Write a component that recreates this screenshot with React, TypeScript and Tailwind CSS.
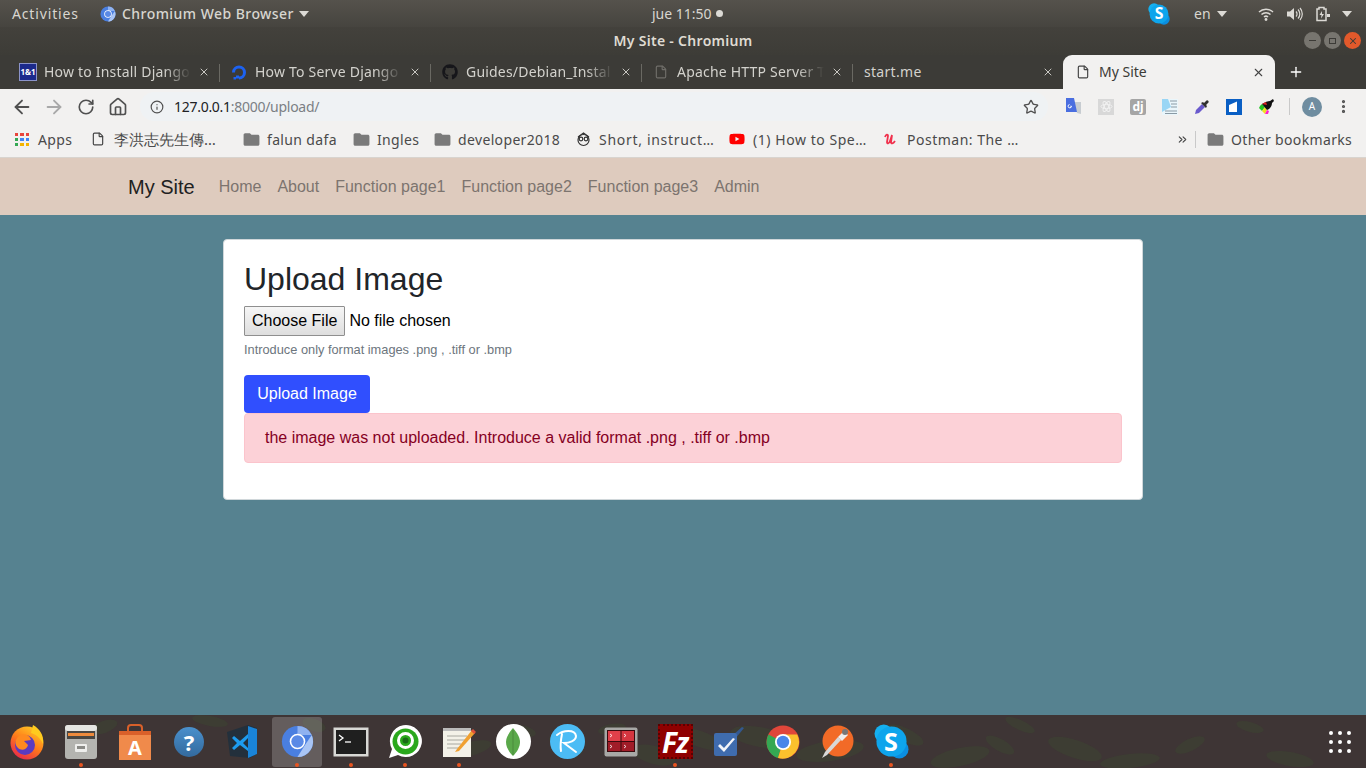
import React from 'react'
import { ArrowLeft, ArrowRight, RotateCw, House, Info, Star, X, Plus, File, EllipsisVertical, ChevronsRight } from 'lucide-react'
import { FaGithub, FaYoutube } from 'react-icons/fa'
import { MdFolder } from 'react-icons/md'

const Caret = ({ className = '' }: { className?: string }) => (
  <svg width="10" height="6" viewBox="0 0 10 6" className={className}>
    <path d="M0 0h10L5 6z" fill="#dcdad5" />
  </svg>
)

const ChromiumIcon = ({ size = 16 }: { size?: number }) => (
  <svg width={size} height={size} viewBox="0 0 36 36">
    <circle cx="18" cy="18" r="17" fill="#4a7fe0" />
    <path d="M18 1a17 17 0 0 1 15.5 10H18z" fill="#8fb2f0" />
    <path d="M33.5 11A17 17 0 0 1 18 35l8-13z" fill="#a9c5f5" />
    <circle cx="18" cy="18" r="8.5" fill="#fff" />
    <circle cx="18" cy="18" r="6.8" fill="#5a8ae6" />
  </svg>
)

const SkypeIcon = ({ size = 22 }: { size?: number }) => (
  <span className="relative flex items-center justify-center" style={{ width: size, height: size }}>
    <svg width={size} height={size} viewBox="0 0 36 36" className="absolute inset-0">
      <circle cx="10" cy="10" r="9.5" fill="#15b0f0" />
      <circle cx="26" cy="26" r="9.5" fill="#0b8ee0" />
      <circle cx="18" cy="18" r="15.5" fill="#0ea5ec" />
    </svg>
    <span className="relative font-bold text-white leading-none font-['Open_Sans',sans-serif]" style={{ fontSize: size * 0.72 }}>S</span>
  </span>
)

const Tab = ({ icon, title }: { icon: React.ReactNode; title: string }) => (
  <div className="relative flex h-full w-[211px] shrink-0 items-center pl-3">
    <span className="flex w-4 shrink-0 justify-center">{icon}</span>
    <span className="ml-2 w-[147px] overflow-hidden whitespace-nowrap pb-[2px] tracking-[0.2px] [mask-image:linear-gradient(to_right,black_82%,transparent)]">{title}</span>
    <X size={12} strokeWidth={2} className="absolute left-[190px] text-[#c9c8c3]" />
    <span className="absolute right-[-1px] top-[9px] h-[18px] w-px bg-[#6a6963]" />
  </div>
)

const Folder = () => <MdFolder size={19} className="shrink-0 text-[#7a7a7a]" />

const Bookmark = ({ icon, label, width, labelClass = 'tracking-[0.35px]' }: { icon: React.ReactNode; label: string; width: number; labelClass?: string }) => (
  <div className="flex shrink-0 items-center" style={{ width }}>
    <span className="flex w-4 shrink-0 justify-center">{icon}</span>
    <span className={`ml-2 whitespace-nowrap ${labelClass}`}>{label}</span>
  </div>
)

const ExtSlot = ({ children }: { children: React.ReactNode }) => (
  <span className="flex h-4 w-8 shrink-0 items-center justify-center">{children}</span>
)

const Dock = ({ children, active, dot }: { children: React.ReactNode; active?: boolean; dot?: boolean }) => (
  <div className="relative flex h-full w-[54px] shrink-0 items-center justify-center">
    {active && <span className="absolute left-[2px] top-[2px] h-[50px] w-[50px] rounded-[3px] bg-white/20" />}
    <span className="relative flex h-[38px] w-[38px] items-center justify-center">{children}</span>
    {dot && <span className="absolute bottom-[1px] left-[25px] h-1 w-1 rounded-full bg-[#e95420]" />}
  </div>
)

// foliage in the wallpaper: cx, cy, rx, ry, rotation
const leaves = [
  [104, 12, 14, 6, -20], [210, 6, 18, 5, 10], [314, 10, 12, 6, 20], [470, 34, 22, 7, -15], [520, 16, 16, 6, 10],
  [566, 30, 18, 8, 25], [612, 14, 14, 5, -10], [654, 40, 22, 9, 15], [700, 24, 26, 8, 20], [760, 22, 30, 10, 10],
  [830, 36, 34, 10, -8], [905, 20, 20, 7, 25], [960, 42, 30, 9, -12], [1020, 10, 16, 5, 25], [1075, 34, 28, 9, 18],
  [1130, 46, 30, 7, -6], [1190, 30, 16, 6, -25], [1250, 12, 14, 5, 15], [1290, 44, 24, 7, 10], [1000, 30, 16, 6, 30],
]

export default function App() {
  return (
    <div className="flex h-screen w-full flex-col overflow-hidden bg-[#568290] font-['Noto_Sans',sans-serif]">
      {/* Ubuntu top bar */}
      <div className="relative flex h-[27px] shrink-0 items-center bg-gradient-to-b from-[#55524c] to-[#46443f] text-[14px] text-[#d8d6d0]">
        <span className="ml-3 w-[68px] whitespace-nowrap tracking-[0.85px]">Activities</span>
        <span className="ml-5"><ChromiumIcon /></span>
        <span className="ml-1.5 w-[172px] whitespace-nowrap font-medium tracking-[0.45px]">Chromium Web Browser</span>
        <Caret className="ml-[5px]" />
        <div className="absolute left-[652px] top-0 flex h-full items-center">
          <span className="whitespace-nowrap">jue 11:50</span>
          <span className="ml-1 h-[7px] w-[7px] rounded-full bg-[#dcdad5]" />
        </div>
        <div className="ml-auto flex items-center">
          <SkypeIcon />
          <span className="ml-6 w-[20px]">en</span>
          <Caret className="ml-[3px]" />
          <svg width="16" height="14" viewBox="0 0 16 14" className="ml-[31px]">
            <path d="M1 5a10 10 0 0 1 14 0M3.5 7.5a6.5 6.5 0 0 1 9 0M6 10a3 3 0 0 1 4 0" fill="none" stroke="#dcdad5" strokeWidth="1.5" />
            <circle cx="8" cy="12.5" r="1.4" fill="#dcdad5" />
          </svg>
          <svg width="16" height="14" viewBox="0 0 16 14" className="ml-[13px]">
            <path d="M0 4.5h3L7 1v12L3 9.500H0z" fill="#dcdad5" />
            <path d="M9 4.500a3.500 3.500 0 0 1 0 5M11 2.500a6.500 6.500 0 0 1 0 9M13 1a9 9 0 0 1 0 12" fill="none" stroke="#dcdad5" strokeWidth="1.2" />
          </svg>
          <svg width="14" height="16" viewBox="0 0 14 16" className="ml-[13px]">
            <path d="M3 1.500h5v1.500h2v11.500H1V3h2z" fill="none" stroke="#dcdad5" strokeWidth="1.500" />
            <path d="M6 5L3.500 9h2L5 12.500 8 8H6z" fill="#dcdad5" />
            <path d="M11 8h3v3h-3z" fill="#dcdad5" />
          </svg>
          <Caret className="ml-[12px] mr-[14px]" />
        </div>
      </div>

      {/* Window title bar */}
      <div className="relative flex h-[28px] shrink-0 items-center justify-center bg-gradient-to-b from-[#43413c] to-[#3d3c37] pb-[2px] text-[14px] font-semibold tracking-[0.3px] text-[#dfdbd2]">
        <span className="whitespace-nowrap">My Site - Chromium</span>
        <div className="absolute right-[5px] top-[5px] flex gap-[3px]">
          <span className="flex h-[17px] w-[17px] items-center justify-center rounded-full bg-[#77756f]"><span className="h-px w-[7px] bg-[#3c3b37]" /></span>
          <span className="flex h-[17px] w-[17px] items-center justify-center rounded-full bg-[#77756f]"><span className="h-[6px] w-[7px] border border-[#3c3b37]" /></span>
          <span className="flex h-[17px] w-[17px] items-center justify-center rounded-full bg-[#e2592b]"><X size={10} strokeWidth={2.5} className="text-[#3c3b37]" /></span>
        </div>
      </div>

      {/* Chrome tab strip */}
      <div className="flex h-[34px] shrink-0 items-center bg-[#3c3b37] pl-2 text-[14px] text-[#d3d2cd]">
        <Tab
          title="How to Install Django"
          icon={<span className="flex h-4 w-4 items-center justify-center bg-[#1c2a8c] text-[8px] font-bold leading-none text-white outline outline-1 outline-[#8b93c9]">1&1</span>}
        />
        <Tab
          title="How To Serve Django"
          icon={
            <svg width="17" height="17" viewBox="0 0 16 16">
              <path d="M8 15v-3a4 4 0 1 0-4-4H1a7 7 0 1 1 7 7z" fill="#1d62f0" />
              <path d="M5 11h3v3H5zM2.500 12.500H5V15H2.500z" fill="#1d62f0" />
            </svg>
          }
        />
        <Tab title="Guides/Debian_Instal" icon={<FaGithub size={16} className="text-[#16161a]" />} />
        <Tab title="Apache HTTP Server T" icon={<File size={14} className="text-[#6f6e69]" />} />
        <div className="relative flex h-full w-[215px] shrink-0 items-center pl-[12px]">
          <span className="pb-[2px] tracking-[0.3px]">start.me</span>
          <X size={12} strokeWidth={2} className="absolute left-[190px] text-[#c9c8c3]" />
        </div>
        <div className="relative ml-[-4px] flex h-full w-[212px] shrink-0 items-center rounded-t-[9px] bg-[#f2f1f0] pl-[13px] text-[#3c3b37]">
          <File size={14} className="text-[#444]" />
          <span className="ml-[9px] pb-[2px]">My Site</span>
          <X size={13} strokeWidth={2} className="absolute left-[189px] text-[#444]" />
        </div>
        <Plus size={16} strokeWidth={2} className="ml-[13px] text-white" />
      </div>

      {/* Chrome toolbar */}
      <div className="flex h-[35px] shrink-0 items-center bg-[#f2f1f0] text-[#555]">
        <ArrowLeft size={22} strokeWidth={2} className="ml-[11px] text-[#505050]" />
        <ArrowRight size={22} strokeWidth={2} className="ml-[10px] text-[#a8a8a8]" />
        <RotateCw size={18} strokeWidth={2.2} className="ml-[12px] text-[#505050]" />
        <House size={20} strokeWidth={2} className="ml-[13px] text-[#505050]" />
        <div className="ml-[12px] flex h-[29px] w-[908px] shrink-0 items-center rounded-full bg-[#eff2f4] pl-[10px] text-[14px] tracking-[-0.28px]">
          <Info size={14} strokeWidth={2} className="text-[#505050]" />
          <span className="ml-[10px] text-[#202124]">127.0.0.1</span>
          <span className="text-[#7b7f84]">:8000/upload/</span>
          <Star size={16} strokeWidth={2} className="ml-auto mr-[9px] text-[#505050]" />
        </div>
        <div className="ml-[10px] flex items-center">
          <ExtSlot>
            <svg width="16" height="17" viewBox="0 0 16 17">
              <path d="M8 4h7v12l-4-1z" fill="#c7ccd1" />
              <path d="M0 0h8l3 14H0z" fill="#4a6ee0" />
              <path d="M3.500 6.500a1.700 1.700 0 1 0 2 1.700H4.300" fill="none" stroke="#fff" strokeWidth="1" />
            </svg>
          </ExtSlot>
          <ExtSlot>
            <span className="flex h-4 w-4 items-center justify-center bg-[#d8d8d8]">
              <svg width="13" height="13" viewBox="0 0 14 14" fill="none" stroke="#f2f2f2" strokeWidth="1">
                <ellipse cx="7" cy="7" rx="6" ry="2.300" />
                <ellipse cx="7" cy="7" rx="6" ry="2.300" transform="rotate(60 7 7)" />
                <ellipse cx="7" cy="7" rx="6" ry="2.300" transform="rotate(120 7 7)" />
              </svg>
            </span>
          </ExtSlot>
          <ExtSlot>
            <span className="flex h-4 w-4 items-center justify-center rounded-[2px] bg-[#a5a5a5] text-[12px] font-bold leading-none text-white">dj</span>
          </ExtSlot>
          <ExtSlot>
            <svg width="16" height="16" viewBox="0 0 16 16">
              <path d="M0 0h16v16H0z" fill="#eaf6fb" />
              <path d="M0 0h6l3 8-9 5z" fill="#9ad6f5" />
              <path d="M8 2h7M9 5h6M9 8h6M3 12h12M3 14.500h12" stroke="#8a9aa5" strokeWidth="1" />
            </svg>
          </ExtSlot>
          <ExtSlot>
            <svg width="16" height="16" viewBox="0 0 16 16">
              <path d="M1 15l1-4 6-6 3 3-6 6z" fill="#6a5acd" />
              <path d="M7 4l5 5 1-2-1-1 2.500-2.500a1.500 1.500 0 0 0-2-2L10 4 9 3z" fill="#303030" />
            </svg>
          </ExtSlot>
          <ExtSlot>
            <svg width="16" height="16" viewBox="0 0 16 16">
              <path d="M0 0h16v16H0z" fill="#0a5fc4" />
              <path d="M3 6l8-3.500V13H3z" fill="#fff" />
            </svg>
          </ExtSlot>
          <ExtSlot>
            <svg width="17" height="17" viewBox="0 0 17 17">
              <path d="M1 10a8 8 0 0 1 3-4l3 3-3 4z" fill="#22c322" />
              <path d="M4 13l3-4 2 3-2 4z" fill="#f0e020" />
              <path d="M7 16l2-4 2 1-1 3z" fill="#ff20d0" />
              <path d="M4 6c3-2 6-3 8-3l3-2 1 2-2 2c0 3-2 6-5 7z" fill="#111" />
              <path d="M4 6l4-2 1 3z" fill="#e02020" />
            </svg>
          </ExtSlot>
        </div>
        <span className="ml-[7px] h-[17px] w-px bg-[#c9c9c9]" />
        <span className="ml-[12px] flex h-5 w-5 items-center justify-center rounded-full bg-[#6f8da0] text-[10px] text-white">A</span>
        <EllipsisVertical size={17} strokeWidth={2.5} className="ml-[13px] text-[#505050]" />
      </div>

      {/* Bookmarks bar */}
      <div className="flex h-[34px] shrink-0 items-center border-b border-[#d8d4cf] bg-[#f2f1f0] pb-[3px] text-[14px] text-[#4a4a4a]">
        <div className="ml-[15px] flex w-[75px] shrink-0 items-center">
          <span className="grid w-[14px] shrink-0 grid-cols-3 gap-[2px]">
            <span className="h-[3px] bg-[#e8453c]" /><span className="h-[3px] bg-[#e8453c]" /><span className="h-[3px] bg-[#e8453c]" />
            <span className="h-[3px] bg-[#34a853]" /><span className="h-[3px] bg-[#4285f4]" /><span className="h-[3px] bg-[#4285f4]" />
            <span className="h-[3px] bg-[#34a853]" /><span className="h-[3px] bg-[#f4b400]" /><span className="h-[3px] bg-[#f4b400]" />
          </span>
          <span className="ml-[9px] tracking-[0.35px]">Apps</span>
        </div>
        <Bookmark width={153} icon={<File size={14} className="text-[#444]" />} label="李洪志先生傳…" labelClass="text-[15px]" />
        <Bookmark width={110} icon={<Folder />} label="falun dafa" />
        <Bookmark width={81} icon={<Folder />} label="Ingles" />
        <Bookmark width={141} icon={<Folder />} label="developer2018" />
        <Bookmark
          width={154}
          icon={
            <svg width="15" height="15" viewBox="0 0 15 15" fill="none" stroke="#333" strokeWidth="1.200">
              <circle cx="7.500" cy="8" r="5.500" />
              <circle cx="5" cy="7" r="1.800" />
              <circle cx="10" cy="7" r="1.800" />
              <path d="M2 5l5.500-4L13 5" />
            </svg>
          }
          label="Short, instruct…"
          labelClass="tracking-[0.7px]"
        />
        <Bookmark width={154} icon={<FaYoutube size={16} className="text-[#ff0000]" />} label="(1) How to Spe…" labelClass="tracking-[0.55px]" />
        <Bookmark
          width={294}
          icon={
            <svg width="14" height="14" viewBox="0 0 14 14" fill="none" stroke="#f0304c" strokeWidth="1.800">
              <path d="M1 5c1-3 3-3 3-1L3 10c0 2 2 2 3-1l2-6-1 7c0 2 2 2 4-1" />
            </svg>
          }
          label="Postman: The …"
          labelClass="tracking-[0.5px]"
        />
        <ChevronsRight size={13} strokeWidth={2} className="ml-[-1px] shrink-0 text-[#444]" />
        <span className="ml-[6px] h-[17px] w-px shrink-0 bg-[#c9c9c9]" />
        <div className="ml-[11px]">
          <Bookmark width={145} icon={<Folder />} label="Other bookmarks" />
        </div>
      </div>

      {/* Page */}
      <div className="flex-1 font-['Liberation_Sans',sans-serif]">
        <nav className="flex h-[57px] items-center bg-[#decbbe] pl-[128px]">
          <span className="text-[20px] text-[#212121]">My Site</span>
          <ul className="ml-[24px] flex gap-4 text-[16px] text-[#7c746f]">
            <li>Home</li>
            <li>About</li>
            <li>Function page1</li>
            <li>Function page2</li>
            <li>Function page3</li>
            <li>Admin</li>
          </ul>
        </nav>
        <div className="mx-auto mt-6 h-[261px] w-[920px] rounded-[4px] border border-[#d0d7da] bg-white px-5 pt-[20px]">
          <h2 className="text-[32px] leading-[38px] text-[#212529]">Upload Image</h2>
          <input
            type="file"
            className="mt-[8px] block h-[30px] w-[300px] text-[16px] text-black file:mr-1 file:h-[30px] file:cursor-default file:rounded-[1px] file:border file:border-[#8f8f8f] file:bg-gradient-to-b file:from-[#f6f6f6] file:to-[#dedede] file:px-[7px] file:text-[16px] file:text-black"
          />
          <p className="mt-[6px] text-[12.8px] leading-[16px] text-[#6c757d]">Introduce only format images .png , .tiff or .bmp</p>
          <button className="mt-[17px] block h-[38px] w-[126px] rounded-[4px] bg-[#304ffe] text-[16px] text-white">Upload Image</button>
          <div className="h-[50px] w-[878px] rounded-[4px] border border-[#fbc4cc] bg-[#fcd1d7] pl-5 pt-[12px] text-[16px] leading-[24px] text-[#85001f]">
            the image was not uploaded. Introduce a valid format .png , .tiff or .bmp
          </div>
        </div>
      </div>

      {/* Ubuntu dock */}
      <div className="relative flex h-[53px] shrink-0 items-center bg-[#3e3535]">
        <svg width="1366" height="53" viewBox="0 0 1366 53" className="absolute inset-0">
          {leaves.map(([cx, cy, rx, ry, rot], i) => (
            <ellipse key={i} cx={cx} cy={cy} rx={rx} ry={ry} transform={`rotate(${rot} ${cx} ${cy})`} fill="#3c4630" opacity={0.45} />
          ))}
        </svg>

        <Dock>
          <svg width="36" height="36" viewBox="0 0 36 36">
            <defs>
              <linearGradient id="ff" x1="0.8" y1="0" x2="0.2" y2="1">
                <stop offset="0" stopColor="#ffd026" />
                <stop offset="0.5" stopColor="#ff7a1a" />
                <stop offset="1" stopColor="#e8244e" />
              </linearGradient>
            </defs>
            <circle cx="18" cy="19" r="16.500" fill="url(#ff)" />
            <circle cx="16" cy="21" r="10" fill="#5b3bc0" />
            <path d="M24 1c7 4 11 10 10 19-3-7-8-10-12-11z" fill="#ffcb1f" />
            <path d="M10 12c5-4 11-1 12 4l-7 1 4 4c-1 5-7 6-10 3s-4-8 1-12z" fill="#ff8a1f" />
          </svg>
        </Dock>
        <Dock dot>
          <svg width="34" height="36" viewBox="0 0 34 36">
            <rect x="1" y="1" width="32" height="34" rx="3" fill="#b4b4b0" />
            <rect x="1" y="1" width="32" height="6" rx="3" fill="#e6e6e3" />
            <rect x="3" y="7" width="28" height="8" fill="#4a4642" />
            <rect x="4" y="9" width="26" height="3" fill="#ee8a3c" />
            <rect x="11" y="20" width="12" height="8" rx="1" fill="#eeeeec" />
            <rect x="13" y="22" width="8" height="3" fill="#8a8a86" />
          </svg>
        </Dock>
        <Dock>
          <span className="relative flex h-[36px] w-[34px] items-center justify-center">
            <svg width="34" height="36" viewBox="0 0 34 36" className="absolute inset-0">
              <path d="M1 7h32v29H1z" fill="#f08a4b" />
              <path d="M1 7h32v4H1z" fill="#d9602a" />
              <path d="M10 9V4a3 3 0 0 1 3-3h8a3 3 0 0 1 3 3v5" fill="none" stroke="#d9602a" strokeWidth="2" />
            </svg>
            <span className="relative mt-3 text-[20px] font-bold leading-none text-white">A</span>
          </span>
        </Dock>
        <Dock>
          <span className="flex h-[30px] w-[30px] items-center justify-center rounded-full bg-gradient-to-b from-[#4a90cc] to-[#336a9e] text-[22px] font-bold leading-none text-white">?</span>
        </Dock>
        <Dock>
          <svg width="32" height="34" viewBox="0 0 32 34">
            <path d="M0 7l21-7 9 3v26l-7 4L3 31z" fill="#23303c" />
            <path d="M21 1l9 3v25l-9 4z" fill="#1a84d8" />
            <path d="M5 13l2-2 6 5 8-7v4l-5 5 5 5v3l-8-6-6 5-2-2 5-5z" fill="#1d9cf0" />
          </svg>
        </Dock>
        <Dock active dot>
          <ChromiumIcon size={33} />
        </Dock>
        <Dock dot>
          <svg width="36" height="30" viewBox="0 0 36 30">
            <rect x="0.500" y="0.500" width="35" height="29" fill="#d8d8d5" />
            <rect x="3" y="3" width="30" height="24" fill="#1f1f1f" />
            <path d="M6 8l4 3-4 3" fill="none" stroke="#fff" strokeWidth="1.300" />
            <path d="M12 15h6" stroke="#fff" strokeWidth="1.300" />
          </svg>
        </Dock>
        <Dock dot>
          <svg width="34" height="34" viewBox="0 0 34 34">
            <path d="M1 33l3-9A16 16 0 1 1 10 30z" fill="#fff" />
            <circle cx="17.500" cy="16.500" r="13" fill="#2aa81c" />
            <circle cx="17.500" cy="15.500" r="7" fill="none" stroke="#fff" strokeWidth="3" />
            <circle cx="17.500" cy="15.500" r="3" fill="#1a6a18" />
          </svg>
        </Dock>
        <Dock dot>
          <svg width="34" height="34" viewBox="0 0 34 34">
            <rect x="1" y="3" width="28" height="29" fill="#f3f1e8" />
            <path d="M1 3h28v3H1z" fill="#bbb" />
            <path d="M5 11h20M5 15h20M5 19h14M5 23h12" stroke="#a8a8a0" strokeWidth="1" />
            <path d="M15 24L30 5l3 3-16 18-4 1z" fill="#f0a030" />
            <path d="M29 6l2-2 3 3-2 2z" fill="#e0503a" />
          </svg>
        </Dock>
        <Dock>
          <span className="flex h-[35px] w-[35px] items-center justify-center rounded-full bg-white">
            <svg width="14" height="28" viewBox="0 0 14 28">
              <path d="M7 0c4 5 7 9 7 14s-3 10-7 14C3 24 0 19 0 14S3 5 7 0z" fill="#5aa84a" />
              <path d="M7 2v25" stroke="#4a8a3c" strokeWidth="1" />
            </svg>
          </span>
        </Dock>
        <Dock>
          <svg width="35" height="35" viewBox="0 0 35 35">
            <circle cx="17.500" cy="17.500" r="17.500" fill="#4cbcf5" />
            <path d="M7 11c6-5 18-6 19 1 0 5-7 7-12 7l12 9M12 10c-1 5-2 11-1 17" fill="none" stroke="#fff" strokeWidth="2" strokeLinecap="round" />
          </svg>
        </Dock>
        <Dock>
          <svg width="34" height="30" viewBox="0 0 34 30">
            <rect x="0.500" y="0.500" width="33" height="29" rx="2" fill="#a8a8a6" />
            <rect x="3" y="3" width="28" height="22" fill="#3a0a0e" />
            <rect x="4" y="4" width="12.500" height="10" fill="#e0404a" />
            <rect x="17.500" y="4" width="12.500" height="10" fill="#d63640" />
            <rect x="4" y="15" width="12.500" height="9" fill="#a01c28" />
            <rect x="17.500" y="15" width="12.500" height="9" fill="#a01c28" />
            <path d="M6 7l2 1.500L6 10M20 7l2 1.500-2 1.500M6 18l2 1.500L6 21M20 18l2 1.500-2 1.500" fill="none" stroke="#fff" strokeWidth="0.800" />
          </svg>
        </Dock>
        <Dock dot>
          <span className="flex h-[35px] w-[35px] items-center justify-center border-2 border-dotted border-[#5a0000] bg-[#8f0000] text-[28px] font-bold italic leading-none tracking-[-1px] text-white">Fz</span>
        </Dock>
        <Dock>
          <svg width="32" height="30" viewBox="0 0 32 30">
            <path d="M20 8l9-8 2 1-9 11z" fill="#33588f" />
            <rect x="1" y="6" width="23" height="23" rx="2" fill="#3f6cae" />
            <path d="M7 17l4 4 9-10 2 1-11 13-6-6z" fill="#f2f4f8" />
          </svg>
        </Dock>
        <Dock>
          <svg width="34" height="34" viewBox="0 0 34 34">
            <circle cx="17" cy="17" r="16.500" fill="#e0463a" />
            <path d="M17 17L2.500 9.500A16.500 16.500 0 0 0 12 33z" fill="#34a853" />
            <path d="M17 9.500h14.200A16.500 16.500 0 0 1 12 33l5-16z" fill="#fbc02d" />
            <circle cx="17" cy="17" r="8" fill="#fff" />
            <circle cx="17" cy="17" r="6.200" fill="#4a86e8" />
          </svg>
        </Dock>
        <Dock>
          <svg width="34" height="34" viewBox="0 0 34 34">
            <circle cx="18" cy="16" r="15.500" fill="#f26a27" />
            <path d="M2 33l5-3 14-15-3-3L5 27z" fill="#d8d8d8" />
            <path d="M18 12l6-6 4 4-6 6z" fill="#eeeeee" />
            <circle cx="25" cy="7" r="3" fill="#777" />
          </svg>
        </Dock>
        <Dock dot>
          <SkypeIcon size={35} />
        </Dock>

        {/* Show applications */}
        <div className="relative ml-auto mr-[15px] grid grid-cols-3 gap-[5px]">
          {Array.from({ length: 9 }).map((_, i) => (
            <span key={i} className="h-[4px] w-[4px] rounded-full bg-white" />
          ))}
        </div>
      </div>
    </div>
  )
}
